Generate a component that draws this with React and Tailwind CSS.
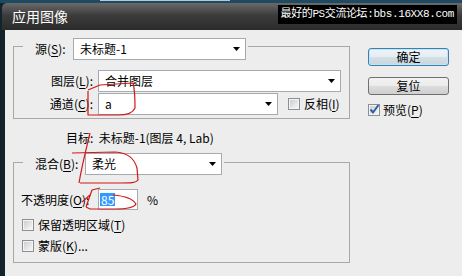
import React from 'react'

const font = "font-['Noto_Sans_CJK_SC',sans-serif]"

function Key({ pre, k, post = '' }) {
	return (
		<span className="whitespace-nowrap">
			{pre}(<span className="underline underline-offset-2">{k}</span>){post}
		</span>
	)
}

function Combo({ className, value }) {
	return (
		<div className={`h-[22px] bg-white border border-[#a7abb0] flex items-center justify-between pl-[6px] pr-[5px] ${className}`}>
			<span className="leading-none">{value}</span>
			<svg width="7" height="4" viewBox="0 0 7 4">
				<path d="M0 0h7L3.5 4z" fill="#000" />
			</svg>
		</div>
	)
}

function Check({ checked, className = '' }) {
	return (
		<div className={`w-[12px] h-[12px] border border-[#8e8f8f] bg-[#f4f4f4] p-[1px] shrink-0 ${className}`}>
			<div className="w-full h-full bg-[linear-gradient(135deg,#cbcfd5,#f6f6f6)] relative">
				{checked && (
					<svg className="absolute -left-[1px] -top-[2px]" width="11" height="11" viewBox="0 0 11 11">
						<path d="M1.5 5.5l2.5 3L9.5 1" stroke="#2c5ea8" strokeWidth="2" fill="none" />
					</svg>
				)}
			</div>
		</div>
	)
}

function Btn({ children, primary }) {
	return (
		<div
			className={`h-[18px] w-[81px] rounded-[3px] border flex items-center justify-center text-[12px] leading-none ${
				primary
					? 'border-[#3c7fb1] bg-[linear-gradient(#eef4f8_0%,#e6eef3_50%,#d5e0e7_50%,#c9d6de_100%)] shadow-[inset_0_0_0_1px_#bfe6f7]'
					: 'border-[#707070] bg-[linear-gradient(#f2f2f2_0%,#ebebeb_50%,#dddddd_50%,#cfcfcf_100%)]'
			}`}
		>
			{children}
		</div>
	)
}

export default function App() {
	return (
		<div className={`w-[462px] h-[276px] relative overflow-hidden bg-[#13232c] flex flex-col text-black ${font}`}>
			{/* desktop strip above the window */}
			<div className="h-[3px] bg-[#1f4a63] flex">
				<div className="w-[100px]" />
				<div className="w-[130px] h-[1px] bg-[#b8c8d0]" />
			</div>

			{/* title bar */}
			<div className="h-[27px] ml-[2px] rounded-tl-[5px] bg-[linear-gradient(#6a6a6a,#3c3c3c_45%,#2b2b2b)] flex items-start justify-between">
				<span className="text-white text-[14px] leading-none pl-[10px] mt-[6px]">应用图像</span>
				<div className="mt-[2px] mr-[5px] h-[19px] px-[3px] bg-black flex items-center whitespace-nowrap text-white text-[11px] leading-none font-['Liberation_Mono','Noto_Sans_CJK_SC',monospace] tracking-[-0.4px]">
					最好的PS交流论坛:bbs.16XX8.com
				</div>
			</div>

			{/* dialog body */}
			<div className="flex-1 ml-[5px] bg-[#ededed] flex text-[12px] leading-none">
				{/* left column */}
				<div className="ml-[8px] w-[337px] flex flex-col">
					{/* source group */}
					<div className="mt-[16px] border border-[#a8a8a8] pb-[3px] flex flex-col">
						<div className="-mt-[9px] ml-[9px] self-start bg-[#ededed] pr-[2px] flex items-center">
							<span className="ml-[12px] w-[38px]"><Key pre="源" k="S" post=":" /></span>
							<Combo className="w-[173px]" value="未标题-1" />
						</div>
						<div className="mt-[10px] flex items-center">
							<span className="w-[84px] text-right pr-[5px]"><Key pre="图层" k="L" post=":" /></span>
							<Combo className="w-[243px]" value="合并图层" />
						</div>
						<div className="mt-[1px] flex items-center">
							<span className="w-[84px] text-right pr-[5px]"><Key pre="通道" k="C" post=":" /></span>
							<Combo className="w-[180px]" value="a" />
							<Check className="ml-[10px]" />
							<span className="ml-[4px]"><Key pre="反相" k="I" /></span>
						</div>
					</div>

					<div className="mt-[11px] pl-[53px] h-[16px] flex items-center">目标:&nbsp; 未标题-1(图层 4, Lab)</div>

					{/* blend group */}
					<div className="mt-[16px] border border-[#a8a8a8] pb-[8px] flex flex-col">
						<div className="-mt-[10px] ml-[9px] self-start bg-[#ededed] pr-[2px] flex items-center">
							<span className="ml-[12px] w-[50px]"><Key pre="混合" k="B" post=":" /></span>
							<Combo className="w-[137px]" value="柔光" />
						</div>
						<div className="mt-[14px] flex items-center">
							<span className="w-[84px] pl-[7px]"><Key pre="不透明度" k="O" post=":" /></span>
							<div className="w-[40px] h-[21px] bg-white border border-[#a7abb0] flex items-center pl-[1px]">
								<span className="bg-[#3399ff] text-white px-[1px] h-[13px] flex items-center">85</span>
							</div>
							<span className="ml-[9px]">%</span>
						</div>
						<div className="mt-[7px] h-[16px] flex items-center">
							<Check className="ml-[8px]" />
							<span className="ml-[4px]"><Key pre="保留透明区域" k="T" /></span>
						</div>
						<div className="mt-[5px] h-[16px] flex items-center">
							<Check className="ml-[8px]" />
							<span className="ml-[4px]"><Key pre="蒙版" k="K" post="..." /></span>
						</div>
					</div>
				</div>

				{/* right column */}
				<div className="ml-[18px] pt-[18px] flex flex-col">
					<Btn primary>确定</Btn>
					<div className="mt-[11px]"><Btn>复位</Btn></div>
					<div className="mt-[7px] h-[16px] flex items-center">
						<Check checked />
						<span className="ml-[3px]"><Key pre="预览" k="P" /></span>
					</div>
				</div>
			</div>

			{/* red hand-drawn annotations */}
			<svg className="absolute inset-0 pointer-events-none" width="462" height="276" viewBox="0 0 462 276">
				<g stroke="#d01818" strokeWidth="1.2" fill="none" strokeLinejoin="round">
					<path d="M88 90 L100 85 L133 83 C135 90 135 100 135 108 C133 113 128 115 118 115 L88 115 L88 91" />
					<path d="M72 153 L115 152 C128 153 134 158 137 168 L138 180 C136 183 130 183 120 183 L80 183" />
					<path d="M90 133 C86 150 82 165 79 183" />
					<path d="M86 207 L92 190 L100 188" />
					<path d="M113 195 C125 196 133 199 136 204 C134 208 126 209 115 209 L90 209 L86 207" />
					<path d="M82 202 L90 195" />
				</g>
			</svg>
		</div>
	)
}
